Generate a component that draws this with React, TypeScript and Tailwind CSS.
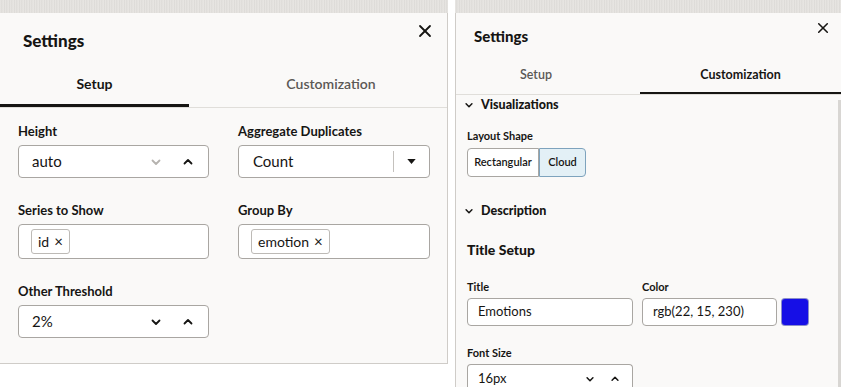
import React from "react";

const ChevronDown = ({ className = "" }: { className?: string }) => (
	<svg viewBox="0 0 12 12" className={className} fill="none" stroke="currentColor" strokeWidth="1.8" strokeLinecap="round" strokeLinejoin="round">
		<polyline points="2.5,4.5 6,8 9.5,4.5" />
	</svg>
);

const ChevronUp = ({ className = "" }: { className?: string }) => (
	<svg viewBox="0 0 12 12" className={className} fill="none" stroke="currentColor" strokeWidth="1.8" strokeLinecap="round" strokeLinejoin="round">
		<polyline points="2.5,7.5 6,4 9.5,7.5" />
	</svg>
);

const Close = ({ className = "" }: { className?: string }) => (
	<svg viewBox="0 0 14 14" className={className} fill="none" stroke="currentColor" strokeWidth="1.8" strokeLinecap="round">
		<line x1="2" y1="2" x2="12" y2="12" />
		<line x1="12" y1="2" x2="2" y2="12" />
	</svg>
);

const Strip = () => (
	<div className="h-[13px] shrink-0 bg-[#e3e1de] bg-[repeating-linear-gradient(90deg,#e9e7e4_0px,#dcdad7_2px,#ebe9e6_3px,#d9d7d4_5px)]" />
);

const Label = ({ children }: { children: React.ReactNode }) => (
	<div className="h-[18px] text-[13px] font-bold leading-[18px] text-[#161513]">{children}</div>
);

const Chip = ({ children }: { children: React.ReactNode }) => (
	<span className="flex h-[25px] items-center gap-[5px] rounded-[3px] border border-[#bdbab6] bg-white px-[6px] text-[14px] text-[#161513]">
		{children}
		<span className="text-[15px] leading-none">×</span>
	</span>
);

const LeftPanel = () => (
	<div className="flex w-[448px] shrink-0 flex-col">
		<Strip />
		<div className="flex h-[351px] flex-col border-r border-b border-[#cfccc8] bg-[#faf9f8]">
			<div className="flex h-[49px] items-start justify-between pl-[23px] pr-[15px] pt-[16px]">
				<h1 className="text-[17px] font-black leading-[24px] text-[#161513]">Settings</h1>
				<Close className="mt-[-5px] h-[14px] w-[14px] text-[#161513]" />
			</div>
			<div className="flex h-[46px] border-b border-[#e0deda]">
				<div className="flex w-[189px] items-center justify-center border-b-[3px] border-[#161513] pt-[1px] text-[14px] font-bold text-[#161513]">
					Setup
				</div>
				<div className="flex flex-1 items-center justify-center pb-[2px] pl-[26px] text-[14px] font-semibold text-[#5b5855]">
					Customization
				</div>
			</div>
			<div className="grid grid-cols-[191px_192px] gap-x-[29px] px-[18px] pt-[14px]">
				<div className="flex flex-col gap-[5px]">
					<Label>Height</Label>
					<div className="flex h-[33px] items-center rounded-[4px] border border-[#a9a6a2] bg-white pl-[13px] pr-[14px] text-[15px] text-[#161513]">
						<span className="flex-1">auto</span>
						<ChevronDown className="mr-[20px] h-[12px] w-[12px] text-[#b5b2ae]" />
						<ChevronUp className="h-[12px] w-[12px] text-[#161513]" />
					</div>
				</div>
				<div className="flex flex-col gap-[5px]">
					<Label>Aggregate Duplicates</Label>
					<div className="flex h-[33px] items-center rounded-[4px] border border-[#a9a6a2] bg-white pl-[14px] text-[15px] text-[#161513]">
						<span className="flex-1">Count</span>
						<span className="h-[21px] w-px bg-[#c4c1bd]" />
						<span className="flex w-[35px] justify-center">
							<svg viewBox="0 0 10 6" className="h-[5px] w-[9px]">
								<polygon points="0,0 10,0 5,6" fill="#161513" />
							</svg>
						</span>
					</div>
				</div>
				<div className="mt-[23px] flex flex-col gap-[5px]">
					<Label>Series to Show</Label>
					<div className="flex h-[35px] items-center rounded-[4px] border border-[#a9a6a2] bg-white pl-[12px]">
						<Chip>id</Chip>
					</div>
				</div>
				<div className="mt-[23px] flex flex-col gap-[5px]">
					<Label>Group By</Label>
					<div className="flex h-[35px] items-center rounded-[4px] border border-[#a9a6a2] bg-white pl-[12px]">
						<Chip>emotion</Chip>
					</div>
				</div>
				<div className="mt-[23px] flex flex-col gap-[5px]">
					<Label>Other Threshold</Label>
					<div className="flex h-[33px] items-center rounded-[4px] border border-[#a9a6a2] bg-white pl-[13px] pr-[14px] text-[15px] text-[#161513]">
						<span className="flex-1">2%</span>
						<ChevronDown className="mr-[20px] h-[12px] w-[12px] text-[#161513]" />
						<ChevronUp className="h-[12px] w-[12px] text-[#161513]" />
					</div>
				</div>
			</div>
		</div>
	</div>
);

const SmallLabel = ({ children }: { children: React.ReactNode }) => (
	<div className="h-[15px] text-[11px] font-bold leading-[15px] text-[#161513]">{children}</div>
);

const Section = ({ title }: { title: string }) => (
	<div className="flex items-center gap-[7px] pl-[8px] text-[12.5px] font-black text-[#161513]">
		<ChevronDown className="h-[10px] w-[10px]" />
		{title}
	</div>
);

const RightPanel = () => (
	<div className="flex min-w-0 flex-1 flex-col overflow-hidden">
		<Strip />
		<div className="flex min-h-0 flex-1 flex-col overflow-hidden border-l border-[#cfccc8] bg-[#faf9f8]">
			<div className="flex h-[44px] shrink-0 items-start justify-between pl-[18px] pr-[12px] pt-[13px]">
				<h1 className="text-[15px] font-black leading-[20px] text-[#161513]">Settings</h1>
				<Close className="mt-[-4px] h-[12px] w-[12px] text-[#161513]" />
			</div>
			<div className="flex h-[38px] shrink-0 border-b border-[#e0deda]">
				<div className="flex w-[184px] items-center justify-center pr-[24px] text-[12.5px] font-semibold text-[#5b5855]">
					Setup
				</div>
				<div className="flex flex-1 items-center justify-center border-b-[2px] border-[#161513] pt-[2px] text-[12.5px] font-bold text-[#161513]">
					Customization
				</div>
			</div>
			<div className="flex min-h-0 flex-1">
				<div className="flex flex-1 flex-col pt-[1px]">
					<Section title="Visualizations" />
					<div className="flex flex-col gap-[5px] pl-[11px] pt-[13px]">
						<SmallLabel>Layout Shape</SmallLabel>
						<div className="flex h-[29px] text-[11px] font-semibold text-[#161513]">
							<div className="flex w-[72px] items-center justify-center rounded-l-[4px] border border-[#a9a6a2] bg-white">
								Rectangular
							</div>
							<div className="flex w-[47px] items-center justify-center rounded-r-[4px] border border-[#7ea3bd] bg-[#e3f0f6]">
								Cloud
							</div>
						</div>
					</div>
					<div className="pt-[25px]">
						<Section title="Description" />
					</div>
					<div className="pl-[11px] pt-[19px] text-[14px] font-black leading-[20px] text-[#161513]">Title Setup</div>
					<div className="flex gap-[9px] pl-[11px] pt-[19px]">
						<div className="flex flex-col gap-[4px]">
							<SmallLabel>Title</SmallLabel>
							<div className="flex h-[28px] w-[166px] items-center rounded-[4px] border border-[#a9a6a2] bg-white pl-[10px] text-[13px] text-[#161513]">
								Emotions
							</div>
						</div>
						<div className="flex flex-col gap-[4px]">
							<SmallLabel>Color</SmallLabel>
							<div className="flex items-center gap-[5px]">
								<div className="flex h-[28px] w-[135px] items-center rounded-[4px] border border-[#a9a6a2] bg-white pl-[10px] text-[13px] text-[#161513]">
									rgb(22, 15, 230)
								</div>
								<div className="h-[26px] w-[26px] rounded-[3px] bg-[#160fe6] shadow-[0_0_0_1px_#8b8ec9]" />
							</div>
						</div>
					</div>
					<div className="flex flex-col gap-[4px] pl-[11px] pt-[19px]">
						<SmallLabel>Font Size</SmallLabel>
						<div className="flex h-[28px] w-[166px] shrink-0 items-center rounded-t-[4px] border border-b-0 border-[#a9a6a2] bg-white pl-[10px] pr-[12px] pt-[2px] text-[13px] text-[#161513]">
							<span className="flex-1">16px</span>
							<ChevronDown className="mr-[15px] h-[10px] w-[10px]" />
							<ChevronUp className="h-[10px] w-[10px]" />
						</div>
					</div>
				</div>
				<div className="mt-[5px] w-[3px] bg-[#d8d6d3]" />
			</div>
		</div>
	</div>
);

const App = () => {
	return (
		<div className="flex h-[387px] w-[841px] gap-[7px] overflow-hidden bg-white font-['Lato','Noto_Sans',sans-serif]">
			<LeftPanel />
			<RightPanel />
		</div>
	);
};

export default App;
